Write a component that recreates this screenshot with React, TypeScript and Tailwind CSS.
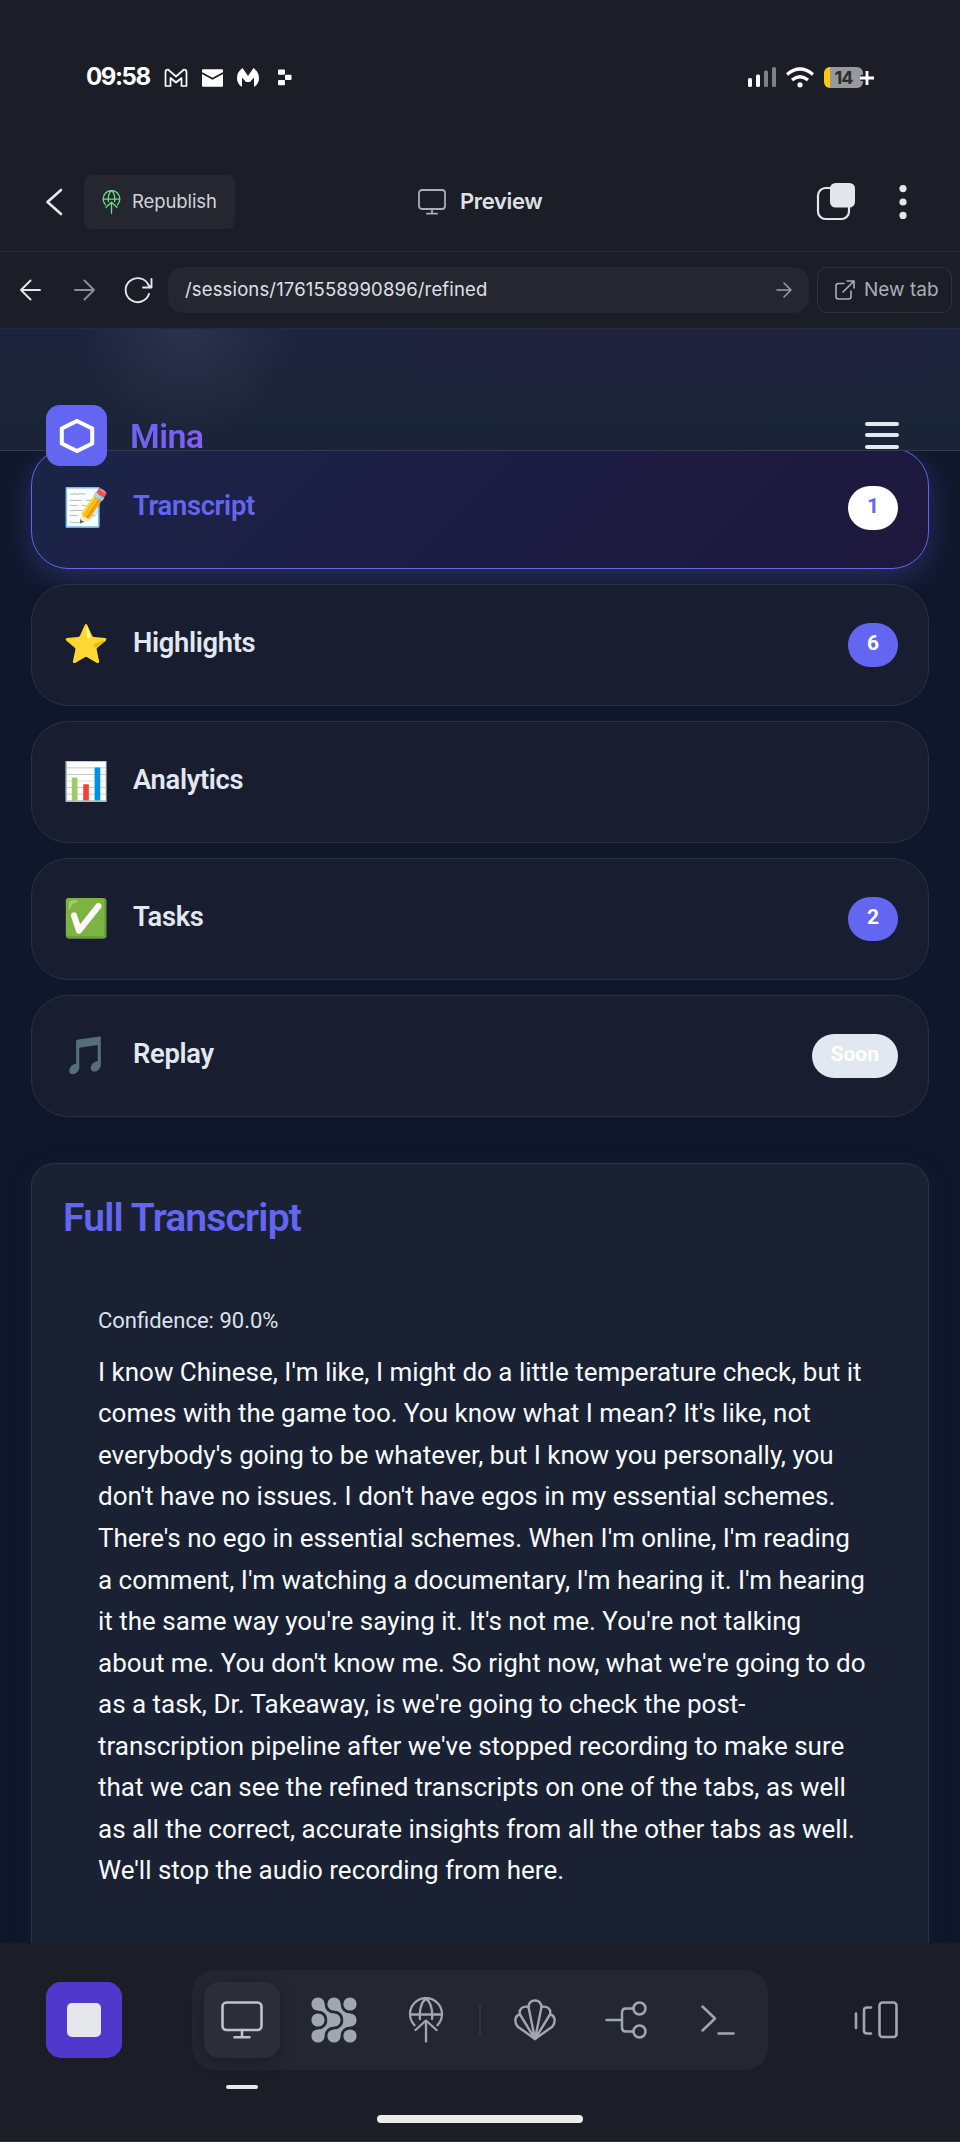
import React from "react";

type SvgProps = { w: number; h: number; className?: string; sw?: number; children: React.ReactNode };

function Stroke({ w, h, className = "", sw = 2, children }: SvgProps) {
  return (
    <svg
      width={w}
      height={h}
      viewBox={`0 0 ${w} ${h}`}
      className={`block shrink-0 ${className}`}
      fill="none"
      stroke="currentColor"
      strokeWidth={sw}
      strokeLinecap="round"
      strokeLinejoin="round"
    >
      {children}
    </svg>
  );
}

function GlobeUp({ w, h, className, sw }: { w: number; h: number; className: string; sw: number }) {
  return (
    <svg
      width={w}
      height={h}
      viewBox="0 0 36 46"
      className={`block shrink-0 ${className}`}
      fill="none"
      stroke="currentColor"
      strokeWidth={sw}
      strokeLinecap="round"
      strokeLinejoin="round"
    >
      <path d="M6.5 28.2A16 16 0 1 1 29.5 28.2M2 17.5H34M18 1.5C13.5 5 11 13 12 22M18 1.5C22.5 5 25 13 24 22" />
      <path d="M7.5 33 18 23.5 28.5 33M18 24V44.5" />
    </svg>
  );
}

function StatusBar() {
  return (
    <div className="flex h-[152px] shrink-0 items-start justify-between pt-[64px] pr-[84px] pl-[86px]">
      <div className="flex h-[26px] items-center">
        <span className="w-[66px] font-['Inter'] text-[24px] leading-[26px] font-bold tracking-[-1.4px] text-white">09:58</span>
        <Stroke w={24} h={20} sw={1.7} className="mt-[1px] ml-[12px] text-white">
          <path d="M1.5 18V4Q1.5 1.5 4 1.5L12 8.5 20 1.5Q22.500 1.5 22.500 4V18H17.500V10L12 14.500 6.500 10V18Z" />
        </Stroke>
        <svg width="21" height="18" viewBox="0 0 21 18" className="mt-[1px] ml-[14px] block">
          <rect width="21" height="17.500" y=".3" rx="1" fill="#fff" />
          <path d="M0 4 10.500 9.800 21 4" fill="none" stroke="#1b1e26" strokeWidth="1.600" />
        </svg>
        <svg width="22" height="20" viewBox="0 0 22 20" className="mt-[1px] ml-[14px] block">
          <path d="M5.500 0 11 8 16.500 0Q22 4 22 10 22 16 17 19V9.500L13 14H9L5 9.500V19Q0 16 0 10 0 4 5.500 0Z" fill="#fff" />
        </svg>
        <svg width="14" height="17" viewBox="0 0 14 17" className="mt-[1px] ml-[19px] block" fill="#fff">
          <rect y=".5" width="7" height="5.300" rx="1" />
          <rect x="7" y="5.800" width="6.500" height="5.200" rx="1" />
          <rect y="11" width="7" height="5.300" rx="1" />
        </svg>
      </div>
      <div className="flex h-[26px] items-center">
        <svg width="28" height="20" viewBox="0 0 28 20" className="block" fill="#fff">
          <rect y="11" width="4" height="9" rx="1.600" />
          <rect x="8" y="7.500" width="4" height="12.500" rx="1.600" />
          <g fill="#808187">
            <rect x="16" y="3.500" width="4" height="16.500" rx="1.600" />
            <rect x="24" y="0" width="4" height="20" rx="1.600" />
          </g>
        </svg>
        <svg width="28" height="21" viewBox="0 0 28 21" className="ml-[10px] block" fill="none" stroke="#fff" strokeWidth="3.200">
          <path d="M1 7.500Q14-3.500 27 7.500" />
          <path d="M6 13Q14 6.500 22 13" />
          <circle cx="14" cy="17.800" r="2.600" fill="#fff" stroke="none" />
        </svg>
        <div className="relative ml-[10px] flex h-[21px] w-[52px] items-center">
          <div className="flex h-[21px] w-[39px] items-center justify-center overflow-hidden rounded-[6px] bg-[linear-gradient(to_right,#fec615_6px,#98999c_6px)] font-['Inter'] text-[18px] leading-[21px] font-bold tracking-[-1px] text-[#2c2d31]">
            14
          </div>
          <svg width="16" height="16" viewBox="0 0 16 16" className="absolute top-[3px] left-[35px]">
            <path d="M8 1.500V14.500M1.500 8H14.500" stroke="#1b1e26" strokeWidth="6" />
            <path d="M8 1V15M1 8H15" stroke="#fff" strokeWidth="2.800" />
          </svg>
        </div>
      </div>
    </div>
  );
}

function Toolbar() {
  return (
    <div className="flex h-[100px] shrink-0 items-center border-b border-[#272a38] pl-[45px] font-['Inter']">
      <Stroke w={18} h={28} sw={2.6} className="text-[#e8eaef]">
        <path d="M16 2 2.500 14 16 26" />
      </Stroke>
      <button className="ml-[21px] flex h-[54px] w-[151px] items-center rounded-[8px] bg-[#24272f] pl-[18px]">
        <GlobeUp w={19} h={24} sw={2.5} className="text-[#6fdd80]" />
        <span className="ml-[11px] text-[18.5px] tracking-[-0.1px] text-[#d0d3d9]">Republish</span>
      </button>
      <div className="ml-[183px] flex w-[380px] items-center">
        <Stroke w={28} h={26} sw={1.8} className="text-[#a9aeb8]">
          <rect x="1" y="1" width="26" height="19" rx="3" />
          <path d="M14 20V24.500M9 24.700H19" />
        </Stroke>
        <span className="ml-[14px] text-[22px] font-semibold tracking-[-0.35px] text-[#dfe1e7]">Preview</span>
      </div>
      <svg width="40" height="38" viewBox="0 0 40 38" className="mr-[43px] ml-[18px] block">
        <rect x="2" y="5" width="31" height="31" rx="7.500" fill="none" stroke="#e4e6eb" strokeWidth="2.200" />
        <rect x="14" y="0" width="25" height="24.500" rx="5.500" fill="#e4e6eb" />
      </svg>
      <svg width="8" height="36" viewBox="0 0 8 36" className="block" fill="#e4e6eb">
        <circle cx="4" cy="4.600" r="3.600" />
        <circle cx="4" cy="18" r="3.600" />
        <circle cx="4" cy="31.400" r="3.600" />
      </svg>
    </div>
  );
}

function AddressBar() {
  return (
    <div className="flex h-[77px] shrink-0 items-center border-b border-[#272a38] pl-[20px] font-['Inter']">
      <Stroke w={21} h={22} sw={1.9} className="text-[#e4e6eb]">
        <path d="M10.500 1.500 1 11 10.500 20.500M1 11H20" />
      </Stroke>
      <Stroke w={21} h={22} sw={1.9} className="ml-[33px] text-[#8b8f9a]">
        <path d="M10.500 1.500 20 11 10.500 20.500M20 11H1" />
      </Stroke>
      <Stroke w={29} h={28} sw={1.9} className="ml-[29px] text-[#e4e6eb]">
        <path d="M25 18A12 12 0 1 1 24.500 9L27 11.500M27.500 3V11.500H19" />
      </Stroke>
      <div className="ml-[15px] flex h-[46px] w-[641px] items-center justify-between rounded-[15px] bg-[#24272f] pr-[17px] pl-[17px]">
        <span className="text-[18.5px] tracking-[0.15px] text-[#dfe1e6]">/sessions/1761558990896/refined</span>
        <Stroke w={16} h={16} sw={1.5} className="text-[#9a9ea8]">
          <path d="M8 1 15 8 8 15M15 8H1" />
        </Stroke>
      </div>
      <button className="ml-[8px] flex h-[46px] w-[135px] items-center rounded-[10px] border border-[#30333f] pl-[17px]">
        <Stroke w={20} h={20} sw={1.6} className="text-[#a9aeb8]">
          <path d="M9 3.500H3.500Q1 3.500 1 6V16.500Q1 19 3.500 19H13.500Q16 19 16 16.500V11M12 1H19V8M19 1 8 12" />
        </Stroke>
        <span className="ml-[9px] text-[19px] text-[#a9aeb8]">New tab</span>
      </button>
    </div>
  );
}

function AppHeader() {
  return (
    <header className="relative z-10 flex h-[122px] shrink-0 items-start justify-between border-b border-[#333b4e] bg-[radial-gradient(circle_at_187px_0px,rgba(60,64,90,0.5),transparent_110px),radial-gradient(ellipse_at_70%_0%,rgba(40,33,66,0.5),transparent_50%),linear-gradient(to_bottom,#1c243b,#1a2436)] pt-[76px] pr-[60px] pl-[46px]">
      <div className="flex items-center">
        <div className="flex h-[61px] w-[61px] items-center justify-center rounded-[14px] bg-[#6366f1]">
          <svg width="36" height="36" viewBox="0 0 36 36" className="block" fill="none" stroke="#fff" strokeWidth="4">
            <path d="M18 3 33.200 10.500V25.500L18 33 2.800 25.500V10.500Z" />
          </svg>
        </div>
        <span className="ml-[23px] bg-[linear-gradient(135deg,#6366f1,#8b5cf6)] bg-clip-text font-['Roboto'] text-[34px] leading-[40px] font-semibold tracking-[-0.6px] text-transparent">
          Mina
        </span>
      </div>
      <div className="mt-[17px] flex w-[36px] flex-col gap-[7.300px] px-[1px]">
        <span className="h-[4px] w-[34px] rounded-full bg-[#e2e8f0]" />
        <span className="h-[4px] w-[34px] rounded-full bg-[#e2e8f0]" />
        <span className="h-[4px] w-[34px] rounded-full bg-[#e2e8f0]" />
      </div>
    </header>
  );
}

type Tab = { icon: string; label: string; badge?: string; active?: boolean; soon?: boolean };

const tabs: Tab[] = [
  { icon: "📝", label: "Transcript", badge: "1", active: true },
  { icon: "⭐", label: "Highlights", badge: "6" },
  { icon: "📊", label: "Analytics" },
  { icon: "✅", label: "Tasks", badge: "2" },
  { icon: "🎵", label: "Replay", badge: "Soon", soon: true },
];

function TabCard({ tab }: { tab: Tab }) {
  return (
    <div
      className={`flex h-[121.400px] items-center rounded-[37px] border pr-[30px] pl-[31px] ${
        tab.active
          ? "border-[#6366f1] bg-[linear-gradient(135deg,#1b2547_0%,#1d1d43_50%,#1e183c_100%)] shadow-[0_8px_32px_rgba(99,102,241,0.3)]"
          : "border-[#2a3142] bg-[#181e30]"
      }`}
    >
      <span className="w-[48px] font-['Noto_Color_Emoji',sans-serif] text-[37px] leading-[44px]">{tab.icon}</span>
      <span
        className={`mb-[4px] ml-[22px] flex-1 text-[27.300px] leading-[40px] font-semibold tracking-[-0.3px] ${
          tab.active ? "text-[#6366f1]" : "text-[#e2e8f0]"
        }`}
      >
        {tab.label}
      </span>
      {tab.badge && (
        <span
          className={`flex h-[44px] items-center justify-center rounded-[22px] px-[19px] pb-[2px] text-[21px] font-bold ${
            tab.active ? "bg-white text-[#6366f1]" : tab.soon ? "bg-[#e2e8f0] text-white" : "bg-[#6366f1] text-white"
          }`}
        >
          {tab.badge}
        </span>
      )}
    </div>
  );
}

const transcriptLines = [
  "I know Chinese, I'm like, I might do a little temperature check, but it",
  "comes with the game too. You know what I mean? It's like, not",
  "everybody's going to be whatever, but I know you personally, you",
  "don't have no issues. I don't have egos in my essential schemes.",
  "There's no ego in essential schemes. When I'm online, I'm reading",
  "a comment, I'm watching a documentary, I'm hearing it. I'm hearing",
  "it the same way you're saying it. It's not me. You're not talking",
  "about me. You don't know me. So right now, what we're going to do",
  "as a task, Dr. Takeaway, is we're going to check the post-",
  "transcription pipeline after we've stopped recording to make sure",
  "that we can see the refined transcripts on one of the tabs, as well",
  "as all the correct, accurate insights from all the other tabs as well.",
  "We'll stop the audio recording from here.",
];

function TranscriptPanel() {
  return (
    <section className="mt-[46px] h-[900px] shrink-0 rounded-[23px] border border-[#2c3344] bg-[#1a2133] pt-[29px] pl-[31px] shadow-[0_8px_24px_rgba(30,41,59,0.35)]">
      <h2 className="text-[39px] leading-[50px] font-semibold tracking-[-0.8px] text-[#6366f1]">Full Transcript</h2>
      <div className="mt-[61px] pl-[35px]">
        <p className="text-[22px] leading-[34px] text-[#dbe1ea]">Confidence: 90.0%</p>
        <div className="mt-[14px] text-[26px] leading-[41.550px] text-[#f8fafc]">
          {transcriptLines.map((line) => (
            <p key={line} className="whitespace-nowrap">
              {line}
            </p>
          ))}
        </div>
      </div>
    </section>
  );
}

function DotsIcon() {
  const pts = [7, 23, 39];
  return (
    <svg width="46" height="46" viewBox="0 0 46 46" className="block" fill="currentColor">
      {pts.map((x) => pts.map((y) => <circle key={`${x}-${y}`} cx={x} cy={y} r="6.600" />))}
      <path d="M13.500 7A9.500 9.500 0 0 0 23 16.500V23H16.500A9.500 9.500 0 0 0 7 13.500V7Z" />
      <path d="M29.500 7A9.500 9.500 0 0 0 39 16.500V23H32.500A9.500 9.500 0 0 0 23 13.500V7Z" />
      <path d="M13.500 39A9.500 9.500 0 0 1 23 29.500V23H16.500A9.500 9.500 0 0 1 7 32.500V39Z" />
      <path d="M29.500 39A9.500 9.500 0 0 1 39 29.500V23H32.500A9.500 9.500 0 0 1 23 32.500V39Z" />
    </svg>
  );
}

function Cell({ active, children }: { active?: boolean; children: React.ReactNode }) {
  return (
    <div
      className={`flex h-[76px] w-[76px] items-center justify-center rounded-[15px] ${
        active ? "bg-[#2b2d38] text-[#bfc3ca] shadow-[0_4px_14px_rgba(20,22,32,0.5)]" : ""
      }`}
    >
      {children}
    </div>
  );
}

function Dock() {
  return (
    <div className="flex h-[199px] shrink-0 flex-col border-b border-[#30303c] bg-[#1b1e26] pt-[27px] text-[#a1a7b1]">
      <div className="flex items-center pl-[46px]">
        <button className="flex h-[76px] w-[76px] items-center justify-center rounded-[15px] bg-[#5138cc]">
          <span className="h-[34px] w-[34px] rounded-[5px] bg-[#e5e7ed]" />
        </button>
        <div className="ml-[70px] flex h-[100px] w-[576px] items-center rounded-[23px] bg-[#24272f] pl-[12px]">
          <Cell active>
            <Stroke w={42} h={38} sw={2.6}>
              <rect x="1.500" y="1.500" width="39" height="27.500" rx="4" />
              <path d="M21 29V36M13.500 36.300H28.500" />
            </Stroke>
          </Cell>
          <div className="w-[16px]" />
          <Cell>
            <DotsIcon />
          </Cell>
          <div className="w-[16px]" />
          <Cell>
            <GlobeUp w={36} h={46} sw={2.3} className="" />
          </Cell>
          <span className="ml-[15px] h-[30px] w-[2px] bg-[#30333f]" />
          <div className="w-[16px]" />
          <Cell>
            <Stroke w={42} h={42} sw={2.4}>
              <path d="M21 40 3.500 27.500C-.5 22 1.500 16 6 15.500 4.500 10 9 6.500 14.500 8 15 3 18 1.500 21 1.500S27 3 27.500 8C33 6.500 37.500 10 36 15.500 40.500 16 42.500 22 38.500 27.500Z" />
              <path d="M6 15.500 21 40 36 15.500M14.500 8 21 40 27.500 8" />
            </Stroke>
          </Cell>
          <div className="w-[15px]" />
          <Cell>
            <Stroke w={42} h={38} sw={2.5}>
              <path d="M1.500 19H17M28.500 7.500H21Q17 7.500 17 11.500V26.500Q17 30.500 21 30.500H28.500" />
              <circle cx="34.500" cy="7.500" r="6" />
              <circle cx="34.500" cy="30.500" r="6" />
            </Stroke>
          </Cell>
          <div className="w-[16px]" />
          <Cell>
            <Stroke w={34} h={32} sw={2.5}>
              <path d="M1.500 2.500 14 14.500 1.500 26.500M17.500 29.500H32.500" />
            </Stroke>
          </Cell>
        </div>
        <Stroke w={44} h={38} sw={2.6} className="ml-[86px]">
          <path d="M2 12.500V27M17 6.500H13Q10 6.500 10 9.500V29.500Q10 32.500 13 32.500H17" />
          <rect x="25.500" y="1.500" width="17" height="34.500" rx="3" />
        </Stroke>
      </div>
      <span className="mt-[15px] ml-[226px] h-[4px] w-[32px] rounded-full bg-[#e8e9ec]" />
      <span className="mt-[26px] ml-[377px] h-[8px] w-[206px] rounded-full bg-[#ececec]" />
    </div>
  );
}

export default function App() {
  return (
    <div className="flex h-[2142px] w-[960px] flex-col overflow-hidden bg-[#1b1e26] font-['Roboto',sans-serif]">
      <StatusBar />
      <Toolbar />
      <AddressBar />
      <main className="flex h-0 flex-1 flex-col overflow-hidden bg-[#0f172a]">
        <AppHeader />
        <div className="-mt-[3.500px] px-[31px]">
          <div className="flex flex-col gap-[15.600px]">
            {tabs.map((tab) => (
              <TabCard key={tab.label} tab={tab} />
            ))}
          </div>
          <TranscriptPanel />
        </div>
      </main>
      <Dock />
    </div>
  );
}
